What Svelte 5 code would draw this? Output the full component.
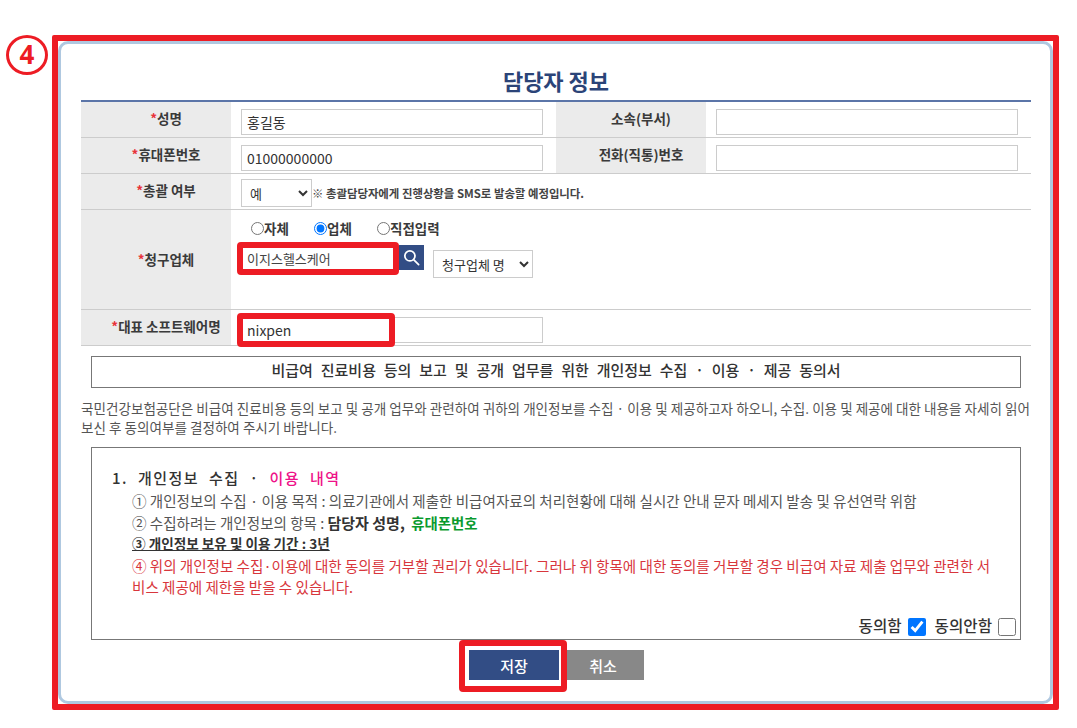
<script>
  const consentTitle = '비급여 진료비용 등의 보고 및 공개 업무를 위한 개인정보 수집 · 이용 · 제공 동의서';
</script>

<div class="page">
  <div class="badge">4</div>
  <section class="frame">
    <div class="panel">
      <h1>담당자 정보</h1>

      <div class="sheet">
        <div class="row r1">
          <div class="label"><i>*</i>성명</div>
          <div class="cell"><input class="text" value="홍길동" /></div>
          <div class="label">소속(부서)</div>
          <div class="cell"><input class="text" /></div>
        </div>
        <div class="row r2">
          <div class="label"><i>*</i>휴대폰번호</div>
          <div class="cell"><input class="text" value="01000000000" /></div>
          <div class="label">전화(직통)번호</div>
          <div class="cell"><input class="text" /></div>
        </div>
        <div class="row wide r3">
          <div class="label"><i>*</i>총괄 여부</div>
          <div class="cell inline">
            <select class="yes"><option>예</option></select>
            <span class="note">※ 총괄담당자에게 진행상황을 SMS로 발송할 예정입니다.</span>
          </div>
        </div>
        <div class="row wide r4">
          <div class="label"><i>*</i>청구업체</div>
          <div class="vendor">
            <div class="radios">
              <label><input type="radio" name="v" />자체</label>
              <label><input type="radio" name="v" checked />업체</label>
              <label><input type="radio" name="v" />직접입력</label>
            </div>
            <div class="search">
              <div class="marked m1"><input class="text" value="이지스헬스케어" /></div>
              <button class="glass" aria-label="검색">
                <svg viewBox="0 0 24 24" width="19" height="19" fill="none" stroke="#fff" stroke-width="2.2" stroke-linecap="round">
                  <circle cx="10" cy="10" r="6.4" /><path d="M15 15l6 6" />
                </svg>
              </button>
              <select class="biller"><option>청구업체 명</option></select>
            </div>
          </div>
        </div>
        <div class="row wide r5">
          <div class="label"><i>*</i>대표 소프트웨어명</div>
          <div class="cell">
            <div class="marked m2"><input class="text" value="nixpen" /></div>
          </div>
        </div>
      </div>

      <div class="consent-title">{consentTitle}</div>

      <p class="intro">국민건강보험공단은 비급여 진료비용 등의 보고 및 공개 업무와 관련하여 귀하의 개인정보를 수집 · 이용 및 제공하고자 하오니, 수집. 이용 및 제공에 대한 내용을 자세히 읽어<br />보신 후 동의여부를 결정하여 주시기 바랍니다.</p>

      <div class="terms">
        <div class="heading">1. 개인정보 수집 · <em>이용 내역</em></div>
        <ul>
          <li>① 개인정보의 수집 · 이용 목적 : 의료기관에서 제출한 비급여자료의 처리현황에 대해 실시간 안내 문자 메세지 발송 및 유선연락 위함</li>
          <li>② 수집하려는 개인정보의 항목 : <b>담당자 성명,</b>&nbsp; <b class="green">휴대폰번호</b></li>
          <li class="under">③ 개인정보 보유 및 이용 기간 : 3년</li>
          <li class="red">④ 위의 개인정보 수집·이용에 대한 동의를 거부할 권리가 있습니다. 그러나 위 항목에 대한 동의를 거부할 경우 비급여 자료 제출 업무와 관련한 서비스 제공에 제한을 받을 수 있습니다.</li>
        </ul>
        <div class="agree">
          <label>동의함<input type="checkbox" checked /></label>
          <label>동의안함<input type="checkbox" /></label>
        </div>
      </div>

      <div class="actions">
        <div class="marked m3"><button class="save">저장</button></div>
        <button class="cancel">취소</button>
      </div>
    </div>
  </section>
</div>

<style>
  :global(body) {
    margin: 0;
    background: #fff;
    font-family: "Noto Sans CJK KR", "Noto Sans", sans-serif;
    color: #333;
  }
  .page {
    position: relative;
    width: 1077px;
    height: 728px;
    padding: 35px 0 0 52px;
    box-sizing: border-box;
  }
  .badge {
    position: absolute;
    left: 6px;
    top: 35px;
    width: 42px;
    height: 40px;
    box-sizing: border-box;
    border: 3.5px solid #ed1c24;
    border-radius: 50%;
    color: #ed1c24;
    font: 700 26px/32px "Noto Sans", sans-serif;
    text-align: center;
  }
  .frame {
    width: 1007px;
    height: 675px;
    box-sizing: border-box;
    border: 6px solid #ed1c24;
    border-radius: 2px;
  }
  .panel {
    height: 100%;
    box-sizing: border-box;
    border: 3px solid #afc8e0;
    border-radius: 10px;
    padding: 0 20px;
    background: #fff;
  }
  h1 {
    margin: 0;
    height: 56px;
    line-height: 72px;
    font-size: 22px;
    font-weight: 700;
    color: #2b4478;
    text-align: center;
    width: 950px;
  }
  .sheet {
    width: 950px;
    border-top: 2px solid #5b75a8;
  }
  .row {
    display: grid;
    grid-template-columns: 150px 325px 150px 325px;
    border-bottom: 1px solid #ccc;
    box-sizing: border-box;
    height: 36px;
  }
  .row.wide {
    grid-template-columns: 150px 800px;
  }
  .r4 { height: 100px; }
  .r4 .label { padding-bottom: 2px; }
  .label {
    display: flex;
    align-items: center;
    justify-content: center;
    background: #ebebeb;
    font-size: 13.5px;
    font-weight: 700;
    color: #3a3a3a;
    padding: 0 0 3px 20px;
    box-sizing: border-box;
    white-space: nowrap;
  }
  .label i {
    color: #e8333a;
    font-style: normal;
  }
  .cell {
    padding: 7px 0 0 10px;
    box-sizing: border-box;
  }
  .cell.inline {
    display: flex;
    align-items: flex-start;
    padding: 5px 0 0 10px;
  }
  .text {
    display: block;
    width: 302px;
    height: 26px;
    box-sizing: border-box;
    border: 1px solid #ccc;
    padding: 1px 5px;
    font: 14px "Noto Sans CJK KR", sans-serif;
    color: #333;
    background: #fff;
    outline: none;
  }
  select {
    box-sizing: border-box;
    border: 1px solid #ccc;
    background-color: #fff;
    font: 13px "Noto Sans CJK KR", sans-serif;
    color: #333;
  }
  .yes {
    width: 71px;
    height: 28px;
    padding-left: 4px;
  }
  .note {
    align-self: center;
    margin-bottom: 2px;
    font-size: 11.4px;
    font-weight: 700;
    color: #444;
    white-space: nowrap;
  }
  .vendor {
    padding: 7px 0 0 10px;
    box-sizing: border-box;
  }
  .radios {
    display: flex;
    gap: 23px;
    padding-left: 10px;
    height: 22px;
    align-items: center;
  }
  .radios label {
    display: flex;
    align-items: center;
    width: 40px;
    white-space: nowrap;
    font-size: 13.5px;
    font-weight: 700;
    color: #3a3a3a;
  }
  .radios input {
    width: 13px;
    height: 13px;
    margin: 0;
    accent-color: #0075ff;
  }
  .search {
    display: flex;
    align-items: flex-start;
    padding-top: 6px;
    height: 40px;
    box-sizing: border-box;
  }
  .search .text {
    width: 158px;
    height: 26px;
    font-size: 13px;
    color: #444;
  }
  .marked {
    position: relative;
  }
  .marked::after {
    content: "";
    position: absolute;
    box-sizing: border-box;
    border: 6px solid #ed1c24;
    border-radius: 4px;
    pointer-events: none;
  }
  .m1::after { left: -4px; top: -3px; width: 162px; height: 33px; }
  .m2 { width: 302px; }
  .m2::after { left: -4px; top: -4px; width: 158px; height: 34px; }
  .m3::after { inset: -10px -8px -12px -10px; }
  .glass {
    width: 25px;
    height: 25px;
    border: 0;
    margin: 0;
    padding: 0;
    background: #324d85;
    display: flex;
    align-items: center;
    justify-content: center;
  }
  .biller {
    width: 100px;
    height: 28px;
    margin: 5px 0 0 9px;
    padding-left: 4px;
  }
  .consent-title {
    width: 930px;
    height: 32px;
    margin: 10px 0 0 10px;
    box-sizing: border-box;
    border: 1px solid #777;
    font-size: 15px;
    font-weight: 500;
    word-spacing: 4.5px;
    line-height: 26px;
    text-align: center;
    color: #333;
    white-space: nowrap;
  }
  .intro {
    margin: 11px 0 0;
    width: 960px;
    font-size: 13.57px;
    line-height: 19px;
    color: #555;
    white-space: nowrap;
  }
  .terms {
    position: relative;
    width: 930px;
    height: 193px;
    margin: 10px 0 0 10px;
    box-sizing: border-box;
    border: 1px solid #777;
    padding: 18px 20px 0;
  }
  .heading {
    font-size: 15px;
    line-height: 24px;
    font-weight: 500;
    letter-spacing: 1.5px;
    word-spacing: 5px;
    color: #333;
  }
  .heading em {
    font-style: normal;
    color: #ee1289;
  }
  ul {
    list-style: none;
    margin: 0;
    padding: 0 0 0 20px;
    width: 862px;
    word-break: break-all;
    font-size: 14.55px;
    line-height: 21.5px;
    color: #555;
  }
  li {
    height: auto;
  }
  b { font-weight: 700; font-size: 15px; line-height: 1; color: #333; }
  b.green { color: #0a9a2e; font-size: 14.4px; }
  .under {
    font-size: 13.6px;
    font-weight: 700;
    text-decoration: underline;
    color: #333;
  }
  .red { color: #d8363c; }
  .agree {
    position: absolute;
    right: 4px;
    bottom: 3px;
    display: flex;
    gap: 9px;
    font-size: 15.6px;
    font-weight: 500;
    color: #333;
  }
  .agree label {
    display: flex;
    align-items: center;
    gap: 6px;
  }
  .agree input {
    width: 18px;
    height: 18px;
    margin: 4px 0 0;
    accent-color: #0075ff;
  }
  .actions {
    display: flex;
    margin: 10px 0 0 388px;
  }
  .actions button {
    height: 30px;
    border: 0;
    color: #fff;
    font: 500 15px "Noto Sans CJK KR", sans-serif;
  }
  .save {
    width: 90px;
    background: #324d85;
    display: block;
  }
  .cancel {
    width: 77px;
    margin-left: 8px;
    padding: 0 5px 0 0;
    background: #888;
  }
</style>
